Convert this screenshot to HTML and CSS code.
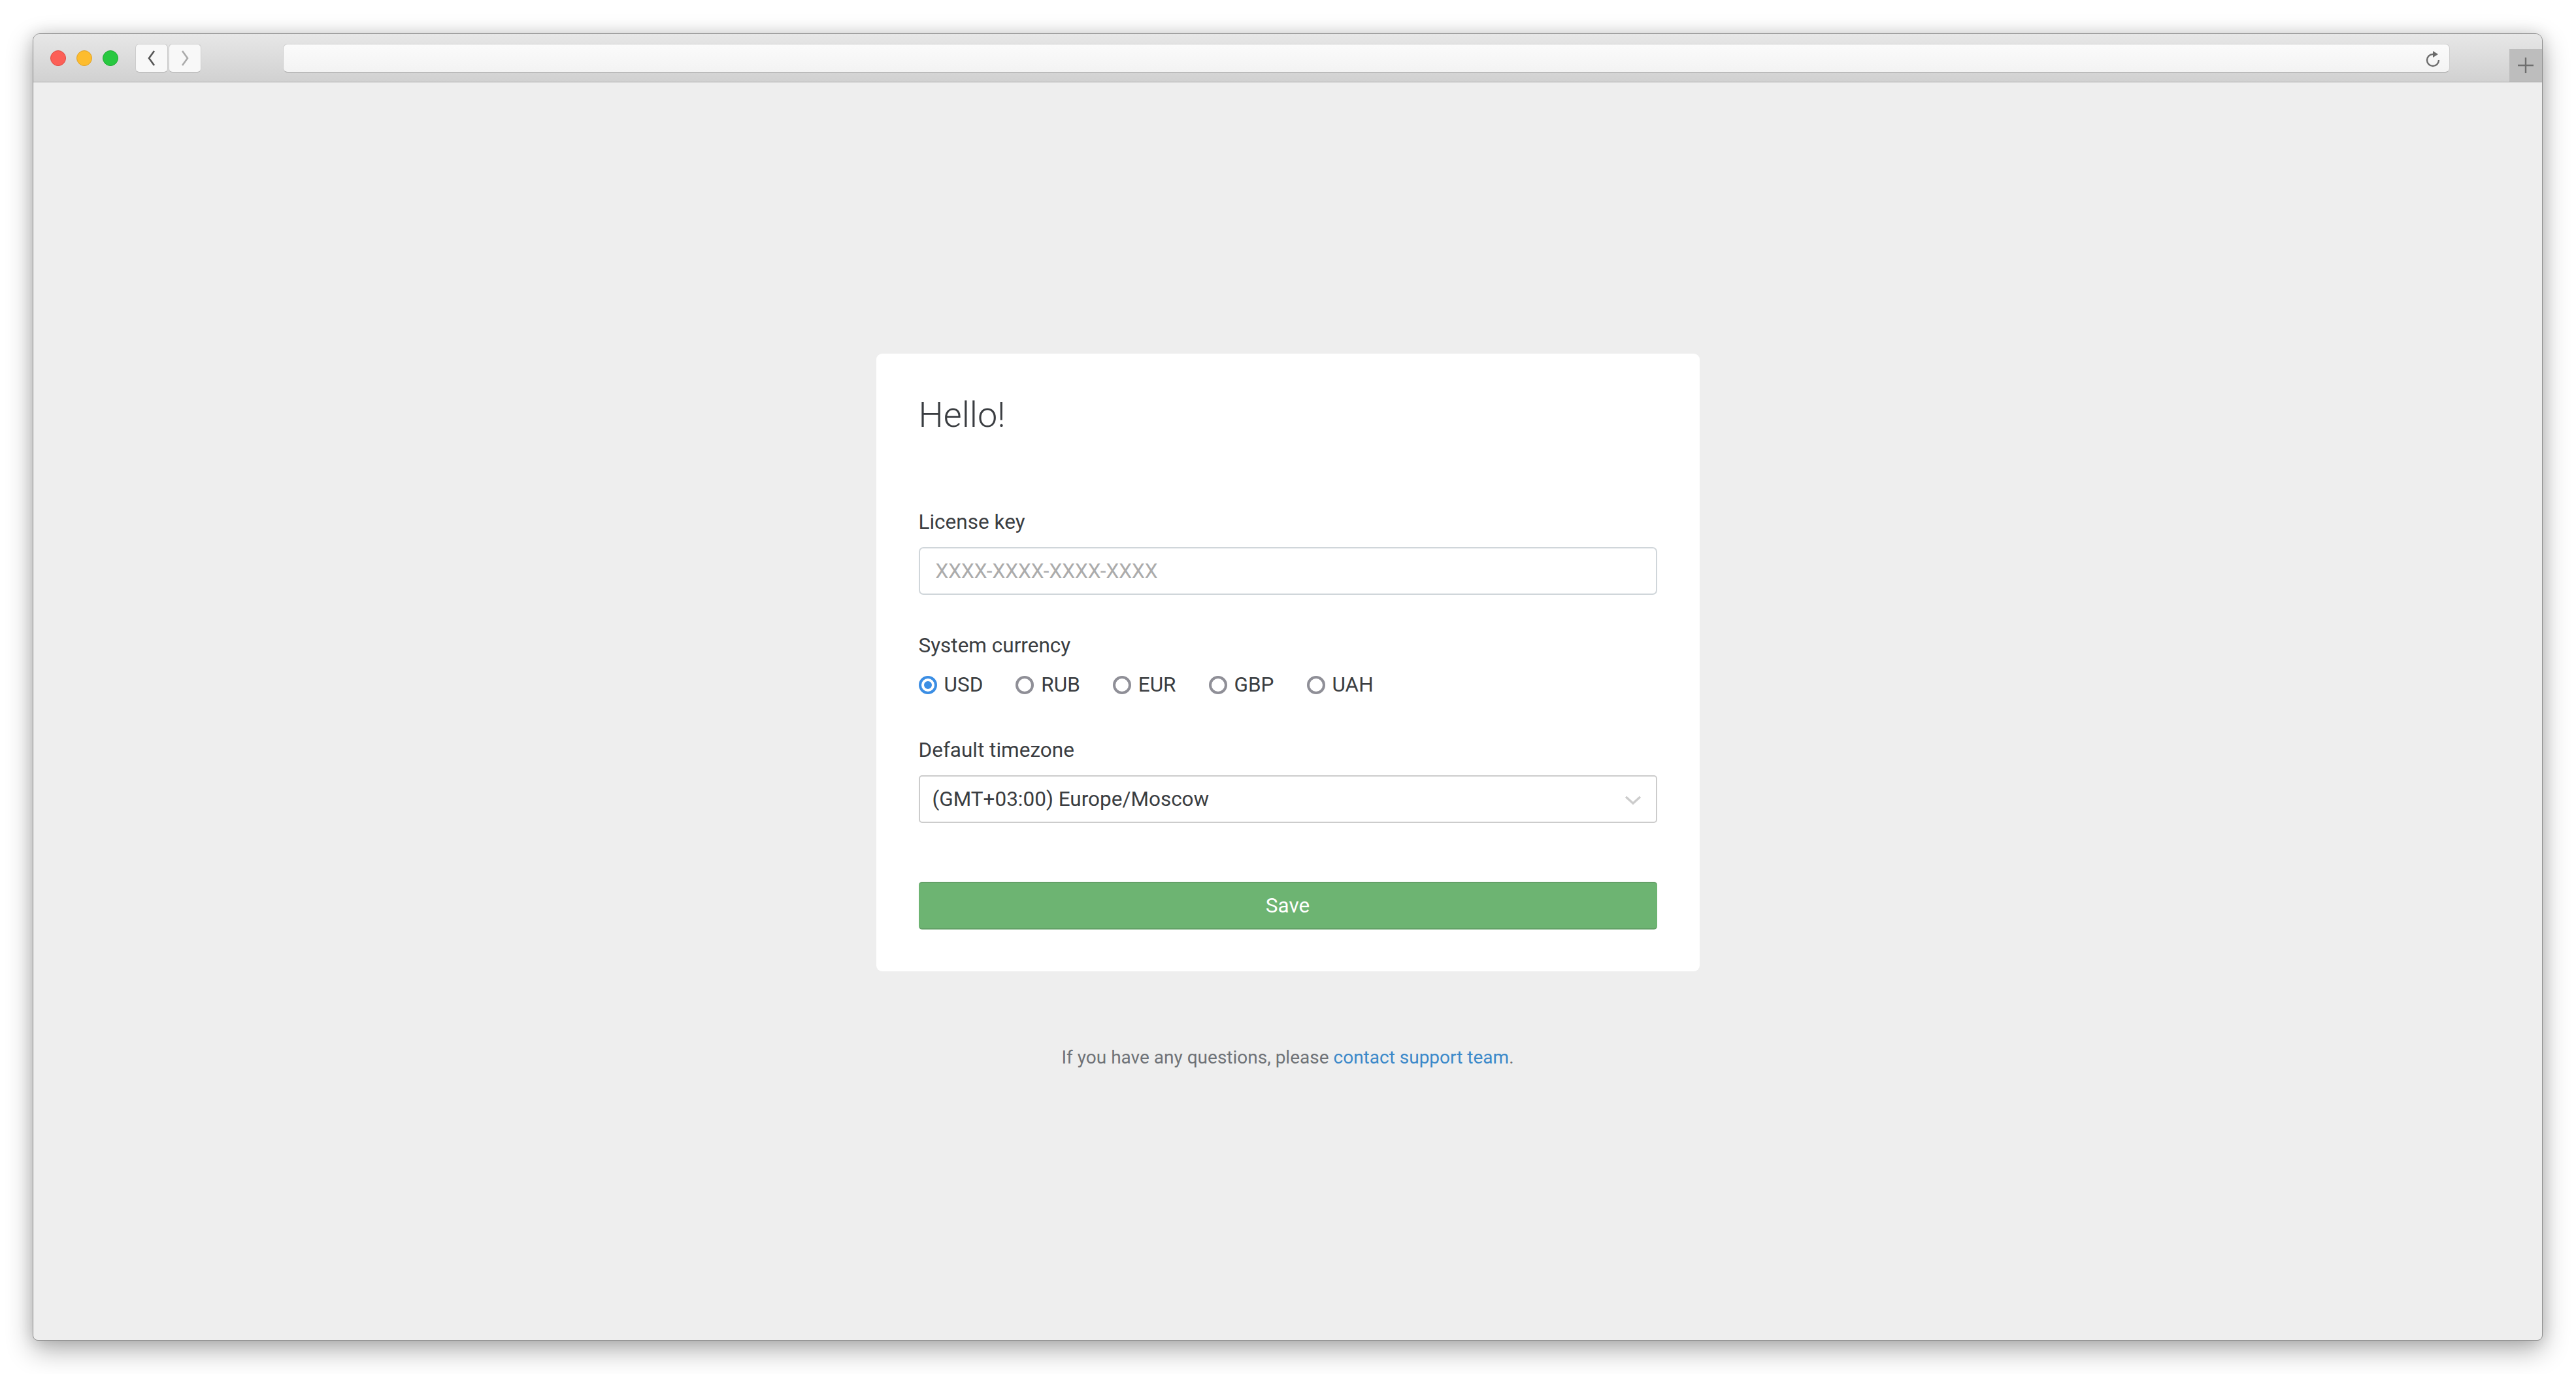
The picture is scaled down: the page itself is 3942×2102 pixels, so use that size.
FILE: index.html
```html
<!DOCTYPE html>
<html lang="en">
<head>
    <meta charset="UTF-8">
    <meta name="viewport" content="width=device-width, initial-scale=1.0">
    <title>Setup</title>
    <link rel="stylesheet" href="styles.css">
</head>
<body>
    <div class="window">
        <div class="toolbar">
            <div class="lights">
                <span class="light light-red"></span>
                <span class="light light-yellow"></span>
                <span class="light light-green"></span>
            </div>
            <div class="nav">
                <button class="nav-btn">
                    <svg width="14" height="26" viewBox="0 0 14 26"><polyline points="11,2 3,13 11,24" fill="none" stroke="#555" stroke-width="2.6"/></svg>
                </button>
                <button class="nav-btn">
                    <svg width="14" height="26" viewBox="0 0 14 26"><polyline points="3,2 11,13 3,24" fill="none" stroke="#aaa" stroke-width="2.6"/></svg>
                </button>
            </div>
            <div class="address">
                <svg class="reload" width="26" height="28" viewBox="0 0 26 28">
                    <path d="M12 8 A9 9 0 1 0 21 17" fill="none" stroke="#6b6b6b" stroke-width="2.4"/>
                    <polygon points="12,3 20,8 12,13" fill="#6b6b6b"/>
                </svg>
            </div>
            <div class="new-tab">
                <svg width="26" height="26" viewBox="0 0 26 26"><path d="M13 1 V25 M1 13 H25" stroke="#6e6e6e" stroke-width="2.4"/></svg>
            </div>
        </div>

        <div class="content">
            <div class="card">
                <h1>Hello!</h1>

                <div class="field">
                    <label class="field-label" for="license">License key</label>
                    <input class="text-input" id="license" type="text" placeholder="XXXX-XXXX-XXXX-XXXX">
                </div>

                <div class="field field-radios">
                    <div class="field-label">System currency</div>
                    <div class="radios">
                        <label class="radio"><input type="radio" name="currency" checked> USD</label>
                        <label class="radio"><input type="radio" name="currency"> RUB</label>
                        <label class="radio"><input type="radio" name="currency"> EUR</label>
                        <label class="radio"><input type="radio" name="currency"> GBP</label>
                        <label class="radio"><input type="radio" name="currency"> UAH</label>
                    </div>
                </div>

                <div class="field field-last">
                    <label class="field-label" for="timezone">Default timezone</label>
                    <div class="select-wrap">
                        <select class="select" id="timezone">
                            <option>(GMT+03:00) Europe/Moscow</option>
                        </select>
                        <svg class="chevron" width="26" height="15" viewBox="0 0 26 15"><polyline points="2,2 13,12 24,2" fill="none" stroke="#cccccc" stroke-width="3.4"/></svg>
                    </div>
                </div>

                <button class="btn-save">Save</button>
            </div>

            <p class="footer">If you have any questions, please <a href="#">contact support team</a>.</p>
        </div>
    </div>
</body>
</html>
```

FILE: styles.css
```css
* {
    box-sizing: border-box;
}

html, body {
    height: 100%;
}

body {
    margin: 0;
    padding: 51px 51px 51px 50px;
    background-color: #ffffff;
    font-family: Roboto, 'Liberation Sans', sans-serif;
}

.window {
    height: 100%;
    display: flex;
    flex-direction: column;
    border: 1px solid #8e8e8e;
    border-radius: 11px 11px 8px 8px;
    background-color: #eeeeee;
    box-shadow: 0 14px 40px rgba(0, 0, 0, 0.32), 0 0 22px rgba(0, 0, 0, 0.12);
    overflow: hidden;
}

/* Browser chrome */
.toolbar {
    height: 74px;
    flex-shrink: 0;
    display: flex;
    align-items: center;
    padding-left: 26px;
    background: linear-gradient(#e7e7e7, #d1d1d1);
    border-bottom: 1px solid #a9a9a9;
}

.lights {
    display: flex;
    gap: 16px;
}

.light {
    width: 24px;
    height: 24px;
    border-radius: 50%;
}

.light-red {
    background-color: #fc5f57;
    border: 1px solid #de4a42;
}

.light-yellow {
    background-color: #fdbc2e;
    border: 1px solid #dea12a;
}

.light-green {
    background-color: #28c840;
    border: 1px solid #1eaa32;
}

.nav {
    display: flex;
    gap: 1px;
    margin-left: 26px;
}

.nav-btn {
    width: 50px;
    height: 44px;
    padding: 0;
    display: flex;
    align-items: center;
    justify-content: center;
    background-color: #f8f8f8;
    border: 1px solid #cccccc;
    border-bottom-color: #b5b5b5;
    border-radius: 6px;
}

.address {
    flex: 1;
    height: 44px;
    margin-left: 125px;
    display: flex;
    align-items: center;
    justify-content: flex-end;
    padding-right: 11px;
    background: linear-gradient(#fbfbfb, #f3f3f3);
    border: 1px solid #d0d0d0;
    border-bottom-color: #a9a9a9;
    border-radius: 7px;
}

.new-tab {
    align-self: flex-end;
    width: 50px;
    height: 50px;
    margin-left: 91px;
    display: flex;
    align-items: center;
    justify-content: center;
    background-color: #bdbdbd;
}

/* Page */
.content {
    flex: 1;
    display: flex;
    flex-direction: column;
    align-items: center;
    justify-content: center;
    padding-top: 2px;
}

.card {
    width: 1260px;
    padding: 62px 65px 64px;
    background-color: #ffffff;
    border-radius: 9px;
    color: #3a3d41;
}

.card h1 {
    margin: 0 0 112px;
    font-size: 54px;
    font-weight: 300;
    line-height: 64px;
}

.field {
    margin-bottom: 58px;
}

.field-last {
    margin-bottom: 90px;
}

.field-label {
    display: block;
    margin-bottom: 18px;
    font-size: 31.5px;
    line-height: 40px;
}

.text-input,
.select {
    display: block;
    width: 100%;
    height: 73px;
    margin: 0;
    font-family: inherit;
    font-size: 31.5px;
    color: #3a3d41;
    background-color: #ffffff;
    outline: none;
}

.text-input {
    padding: 0 24px;
    border: 2px solid #d0d6da;
    border-radius: 7px;
}

.text-input::placeholder {
    color: #ababab;
}

.radios {
    display: flex;
    gap: 50px;
}

.radio {
    display: flex;
    align-items: center;
    gap: 11px;
    height: 44px;
    font-size: 31.5px;
}

.radio input {
    appearance: none;
    -webkit-appearance: none;
    width: 28px;
    height: 28px;
    margin: 0;
    border: 4px solid #8f8f97;
    border-radius: 50%;
    display: flex;
    align-items: center;
    justify-content: center;
}

.radio input:checked {
    border-color: #3b8ee4;
}

.radio input:checked::after {
    content: "";
    width: 12px;
    height: 12px;
    border-radius: 50%;
    background-color: #3b8ee4;
}

.select-wrap {
    position: relative;
}

.select {
    appearance: none;
    -webkit-appearance: none;
    padding: 0 60px 0 19px;
    border: 2px solid #cccccc;
    border-radius: 5px;
}

.chevron {
    position: absolute;
    right: 24px;
    top: 31px;
}

.btn-save {
    display: block;
    width: 100%;
    height: 73px;
    font-family: inherit;
    font-size: 31.5px;
    color: #ffffff;
    background-color: #6db472;
    border: none;
    border-top: 2px solid #63a067;
    border-bottom: 2px solid #63a067;
    border-radius: 5px;
}

.footer {
    margin: 112px 0 0;
    font-size: 28px;
    line-height: 40px;
    color: #6e7277;
}

.footer a {
    color: #3a88c9;
    text-decoration: none;
}
```
